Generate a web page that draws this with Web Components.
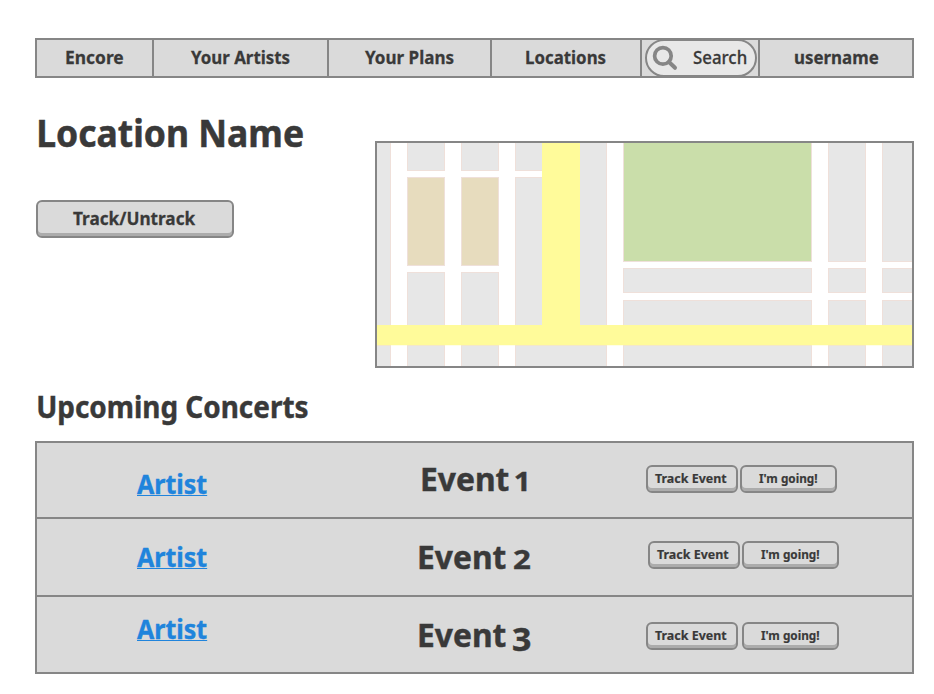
<!DOCTYPE html>
<html lang="en">
<head>
<meta charset="utf-8">
<title>Encore</title>
<style>
body{margin:0;background:#fff;color:#393939;font-family:"Noto Sans","Open Sans",sans-serif;font-weight:700}
</style>
</head>
<body>
<encore-page></encore-page>
<script>
const define = (name, html, setup) => {
  const t = document.createElement('template');
  t.innerHTML = html;
  customElements.define(name, class extends HTMLElement {
    connectedCallback() {
      if (this.shadowRoot) return;
      this.attachShadow({mode: 'open'}).append(t.content.cloneNode(true));
      if (setup) setup(this, this.shadowRoot);
    }
  });
};

/* A label whose visible glyphs span exactly `w` pixels. */
const pen = document.createElement('canvas').getContext('2d');
define('fit-text', `<style>
  :host{display:block;flex:none;white-space:pre}
  span{display:inline-block;transform-origin:0 0;vertical-align:top;-webkit-text-stroke:.014em currentColor}
  :host([link]) span{text-decoration:underline 1px;text-underline-offset:1px;text-decoration-skip-ink:none}
</style><span><slot></slot></span>`, (el, root) => {
  const size = +el.getAttribute('size'), w = +el.getAttribute('w');
  const weight = el.getAttribute('weight') || 700;
  pen.font = `${weight} ${size}px "Noto Sans"`;
  const m = pen.measureText(el.textContent);
  const k = w / (m.actualBoundingBoxRight + m.actualBoundingBoxLeft);
  el.style.cssText += `;width:${w}px;height:${size}px;font-size:${size}px;line-height:${size}px;font-weight:${weight}`;
  root.querySelector('span').style.transform = `translateX(${m.actualBoundingBoxLeft * k}px) scaleX(${k})`;
});

define('push-button', `<style>
  :host{display:flex;flex:none;box-sizing:border-box;justify-content:center;border:2px solid #868686;border-radius:6px;background:#dadada;box-shadow:inset 0 -3px #acacac}
</style><slot></slot>`);

define('nav-item', `<style>
  :host{display:flex;justify-content:center;padding-top:8px;border-right:2px solid #868686}
  :host(:last-child){border-right:0}
</style><slot></slot>`);

define('search-box', `<style>
  :host{display:flex;box-sizing:border-box;width:112px;height:38px;margin:-1px 0 -1px 3px;border:2px solid #868686;border-radius:19px;background:#e8e8e8}
  svg{flex:none;margin:4px 0 0 5px;width:27px;height:27px}
  fit-text{margin:7px 0 0 14px}
</style><svg viewBox="0 0 27 27" fill="none" stroke="#868686"><circle cx="10.9" cy="10.9" r="8.3" stroke-width="3.7"/><path d="M17 17L23 22.8" stroke-width="4" stroke-linecap="round"/></svg>
<fit-text size="18" w="53" weight="500">Search</fit-text>`);

define('nav-bar', `<style>
  :host{display:grid;grid-template-columns:117px 175px 163px 150px 118px 1fr;box-sizing:border-box;height:40px;border:2px solid #868686;background:#dadada}
  .search{display:flex;border-right:2px solid #868686}
</style>
<nav-item><fit-text size="18" w="57">Encore</fit-text></nav-item>
<nav-item><fit-text size="18" w="99">Your Artists</fit-text></nav-item>
<nav-item><fit-text size="18" w="89">Your Plans</fit-text></nav-item>
<nav-item><fit-text size="18" w="80">Locations</fit-text></nav-item>
<div class="search"><search-box></search-box></div>
<nav-item><fit-text size="18" w="83">username</fit-text></nav-item>`);

define('street-map', `<style>
  :host{display:block;box-sizing:border-box;width:539px;height:227px;border:2px solid #868686}
  svg{display:block}
</style><svg width="535" height="223" viewBox="377 143 535 223"></svg>`, (el, root) => {
  const gray = '#e7e7e7', tan = '#e7dcbe', green = '#cadeaa';
  const blocks = [];
  const add = (x1, x2, rows, fill = gray) => rows.forEach(([a, b]) => blocks.push([x1, a, x2, b, fill]));
  add(370, 391, [[140, 330], [345, 370]]);
  for (const [a, b] of [[407, 445], [461, 499]]) {
    add(a, b, [[140, 171], [272, 330], [345, 370]]);
    add(a, b, [[177, 266]], tan);
  }
  add(515, 550, [[140, 171], [177, 330]]);
  add(575, 607, [[140, 330]]);
  add(515, 607, [[345, 370]]);
  add(623, 812, [[140, 262]], green);
  add(623, 812, [[268, 293], [300, 330], [345, 370]]);
  for (const [a, b] of [[828, 866], [882, 920]]) add(a, b, [[140, 262], [268, 293], [300, 330], [345, 370]]);
  root.querySelector('svg').innerHTML = blocks.map(([x, y, r, b, f]) =>
    `<rect x="${x + .5}" y="${y + .5}" width="${r - x - 1}" height="${b - y - 1}" fill="${f}" stroke="#efe0da"/>`).join('') +
    '<path d="M542 143h38v182h332v20.3H377V325h165z" fill="#fffb9a"/>';
});

define('event-row', `<style>
  :host{display:grid;grid-template-columns:382px 227px 1fr;align-items:start;border-bottom:2px solid #868686;background:#dadada}
  :host(:last-child){border-bottom:0}
  .artist{color:#2084dc;padding:var(--artist-top) 0 0 100px}
  .event{display:flex;padding-top:var(--event-top)}
  .actions{display:flex;padding-top:var(--actions-top);gap:var(--gap,2px);margin-left:var(--shift,0px)}
  push-button{height:28px;padding-top:5px}
</style>
<div class="artist"><fit-text link size="27" w="69.5">Artist</fit-text></div>
<div class="event"><slot></slot></div>
<div class="actions">
<push-button style="width:92px;padding-right:2px"><fit-text size="13" w="72">Track Event</fit-text></push-button>
<push-button style="width:97px;padding-right:2px"><fit-text size="13" w="58">I'm going!</fit-text></push-button>
</div>`);

define('event-list', `<style>
  :host{display:grid;grid-template-rows:76px 78px 75px;box-sizing:border-box;height:233px;border:2px solid #868686}
</style><slot></slot>`);

define('encore-page', `<style>
  :host{display:block;padding:38px 20px 0 35px}
  .place{display:flex;justify-content:space-between;height:290px}
  .info{padding-left:1px}
  .info > fit-text{margin:35px 0 0 3px}
  .info push-button{width:198px;height:38px;margin-top:49px;padding:7px 1px 0 0}
  street-map{margin-top:63px}
  .heading{height:73px;box-sizing:border-box;padding:23px 0 0 3px}
  event-list{width:879px}
  event-row fit-text + fit-text{margin-left:7px}
</style>
<nav-bar></nav-bar>
<div class="place">
  <div class="info">
    <fit-text size="38" w="263.5">Location Name</fit-text>
    <push-button><fit-text size="18" w="123">Track/Untrack</fit-text></push-button>
  </div>
  <street-map></street-map>
</div>
<div class="heading"><fit-text size="31" w="270">Upcoming Concerts</fit-text></div>
<event-list>
  <event-row style="--artist-top:27px;--event-top:19px;--actions-top:22px"><fit-text size="33" w="87" style="margin-left:3px">Event</fit-text><fit-text size="26" w="11.5" style="margin-top:6px;margin-left:6px">1</fit-text></event-row>
  <event-row style="--artist-top:24px;--event-top:21px;--actions-top:22px;--shift:2px"><fit-text size="33" w="87">Event</fit-text><fit-text size="26" w="18" style="margin-top:6px">2</fit-text></event-row>
  <event-row style="--artist-top:18px;--event-top:21px;--actions-top:25px;--gap:4px"><fit-text size="33" w="87">Event</fit-text><fit-text size="32" w="18" style="margin-top:5px">3</fit-text></event-row>
</event-list>`);
</script>
</body>
</html>
